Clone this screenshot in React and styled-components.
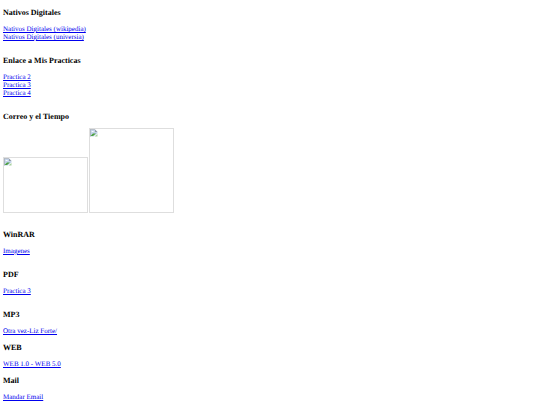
import React from "react";
import styled, { createGlobalStyle } from "styled-components";

const GlobalStyle = createGlobalStyle`
  body {
    margin: 0;
    background: #fff;
    color: #000;
    font-family: "Liberation Serif", "Times New Roman", serif;
    font-size: 7px;
    line-height: 8px;
    text-rendering: geometricPrecision;
  }
`;

const Page = styled.main`
  display: flex;
  flex-direction: column;
  padding: 8px 3px 0;
`;

const Section = styled.section`
  display: flex;
  flex-direction: column;
  align-items: flex-start;
  gap: ${(p) => (p.$media ? 7 : 8)}px;
  padding-bottom: ${(p) => (p.$media ? 17 : p.$tight ? 8 : 15)}px;

  &:last-child {
    padding-bottom: 0;
  }
`;

const Heading = styled.h3`
  margin: 0;
  font-size: 8px;
  line-height: 9px;
`;

const LinkList = styled.div`
  display: flex;
  flex-direction: column;
  align-items: flex-start;
`;

const Link = styled.a`
  color: #0000ee;
  text-decoration: underline;
`;

const Gallery = styled.div`
  display: flex;
  align-items: flex-end;
  gap: 1px;
`;

const Frame = styled.a`
  box-sizing: border-box;
  width: 85px;
  height: ${(p) => p.$height}px;
  border: 1px solid #dedede;
`;

const BrokenIcon = styled.svg`
  display: block;
`;

function MissingPicture({ height, label }) {
  return (
    <Frame href="#" aria-label={label} $height={height}>
      <BrokenIcon width="8" height="8" viewBox="0 0 16 16" aria-hidden="true">
        <path d="M0 1h10l5 5v3l-8 6H0z" fill="#c3d3ea" />
        <path d="M0 1h10M1 1v14" fill="none" stroke="#a9b0ba" strokeWidth="1.5" />
        <path d="M10 1v5h5z" fill="#8f98a5" />
        <path d="M3 6q0-2 2-2t3 2z" fill="#fff" />
        <path d="M1 14l5-5h6l-6 5z" fill="#4ba03d" />
        <path d="M9 15l6-5v5z" fill="#a5cf9c" />
      </BrokenIcon>
    </Frame>
  );
}

const sections = [
  { title: "Nativos Digitales", links: ["Nativos Digitales (wikipedia)", "Nativos Digitales (universia)"] },
  { title: "Enlace a Mis Practicas", links: ["Practica 2", "Practica 3", "Practica 4"] },
  {
    title: "Correo y el Tiempo",
    pictures: [
      { label: "Correo", height: 56 },
      { label: "Tiempo", height: 85 },
    ],
  },
  { title: "WinRAR", links: ["Imagenes"] },
  { title: "PDF", links: ["Practica 3"] },
  { title: "MP3", links: ["Otra vez-Liz Forte/"], tight: true },
  { title: "WEB", links: ["WEB 1.0 - WEB 5.0"], tight: true },
  { title: "Mail", links: ["Mandar Email"], tight: true },
];

export default function App() {
  return (
    <>
      <GlobalStyle />
      <Page>
        {sections.map((s) => (
          <Section key={s.title} $tight={s.tight} $media={Boolean(s.pictures)}>
            <Heading>{s.title}</Heading>
            {s.pictures && (
              <Gallery>
                {s.pictures.map((p) => (
                  <MissingPicture key={p.label} {...p} />
                ))}
              </Gallery>
            )}
            {s.links && (
              <LinkList>
                {s.links.map((l) => (
                  <Link key={l} href="#">{l}</Link>
                ))}
              </LinkList>
            )}
          </Section>
        ))}
      </Page>
    </>
  );
}
